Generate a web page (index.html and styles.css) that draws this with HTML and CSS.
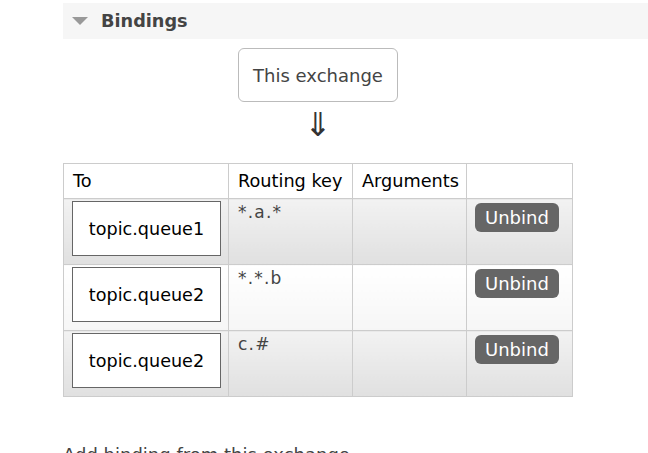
FILE: index.html
```html
<!DOCTYPE html>
<html>
<head>
<meta charset="utf-8">
<link rel="stylesheet" href="styles.css">
</head>
<body>
<div class="page">
  <div class="section-head">
    <span class="tri"></span>
    <h2>Bindings</h2>
  </div>
  <div class="source">
    <div class="exchange-box">This exchange</div>
    <div class="arrow">⇓</div>
  </div>
  <table class="bindings">
    <colgroup>
      <col class="c1"><col class="c2"><col class="c3"><col class="c4">
    </colgroup>
    <thead>
      <tr><th>To</th><th>Routing key</th><th>Arguments</th><th></th></tr>
    </thead>
    <tbody>
      <tr class="alt1">
        <td><div class="queue">topic.queue1</div></td>
        <td class="key">*.a.*</td>
        <td></td>
        <td><span class="btn">Unbind</span></td>
      </tr>
      <tr class="alt0">
        <td><div class="queue">topic.queue2</div></td>
        <td class="key">*.*.b</td>
        <td></td>
        <td><span class="btn">Unbind</span></td>
      </tr>
      <tr class="alt1">
        <td><div class="queue">topic.queue2</div></td>
        <td class="key">c.#</td>
        <td></td>
        <td><span class="btn">Unbind</span></td>
      </tr>
    </tbody>
  </table>
  <p class="add">Add binding from this exchange</p>
</div>
</body>
</html>
```

FILE: styles.css
```css
html, body {
  margin: 0;
  padding: 0;
  background: #fff;
}
body {
  font-family: "DejaVu Sans", Verdana, sans-serif;
  color: #444;
  overflow: hidden;
  height: 453px;
}
.page {
  padding: 3px 0 0 63px;
}
.section-head {
  display: flex;
  align-items: center;
  height: 36px;
  background: #f6f6f6;
  padding-left: 9px;
}
.tri {
  width: 0;
  height: 0;
  border-left: 8px solid transparent;
  border-right: 8px solid transparent;
  border-top: 8px solid #999;
  margin-right: 13px;
}
.section-head h2 {
  margin: 0;
  font-size: 17.7px;
  font-weight: bold;
  color: #444;
}
.source {
  width: 160px;
  margin: 9px 0 0 175px;
  display: flex;
  flex-direction: column;
  align-items: center;
}
.exchange-box {
  box-sizing: border-box;
  width: 160px;
  height: 54px;
  border: 1px solid #bbb;
  border-radius: 6px;
  display: flex;
  align-items: center;
  justify-content: center;
  font-size: 18px;
  color: #444;
}
.arrow {
  font-size: 33px;
  line-height: 34px;
  margin-top: 6px;
  color: #333;
}
.bindings {
  margin-top: 21px;
  border-collapse: collapse;
  table-layout: fixed;
  width: 510px;
}
.c1 { width: 165px; }
.c2 { width: 124px; }
.c3 { width: 114px; }
.c4 { width: 106px; }
.bindings th,
.bindings td {
  border: 1px solid #ccc;
  vertical-align: top;
}
.bindings th {
  text-align: left;
  font-weight: normal;
  color: #000;
  font-size: 17.7px;
  line-height: 21px;
  height: 35px;
  white-space: nowrap;
  box-sizing: border-box;
  padding: 7px 6px 6px 9px;
  background: #fff;
}
.bindings td {
  height: 66px;
  box-sizing: border-box;
  padding: 2px 8px 8px 8px;
}
.alt1 td {
  background: linear-gradient(#f2f2f2, #e0e0e0);
}
.alt0 td {
  background: linear-gradient(#ffffff, #f6f6f6);
}
.queue {
  box-sizing: border-box;
  width: 149px;
  height: 55px;
  background: #fff;
  border: 1px solid #666;
  display: flex;
  align-items: center;
  justify-content: center;
  font-size: 17.6px;
  color: #000;
}
.key {
  font-size: 17px;
  line-height: 20px;
  letter-spacing: 1.2px;
  color: #444;
  padding-top: 3px !important;
  padding-left: 9px !important;
}
.btn {
  display: inline-block;
  margin-top: 2px;
  background: #666;
  color: #fff;
  font-weight: normal;
  font-size: 18px;
  line-height: 21px;
  padding: 4px 10px;
  border-radius: 6px;
}
.add {
  margin: 47px 0 0 0;
  font-size: 18px;
  color: #444;
}
```
